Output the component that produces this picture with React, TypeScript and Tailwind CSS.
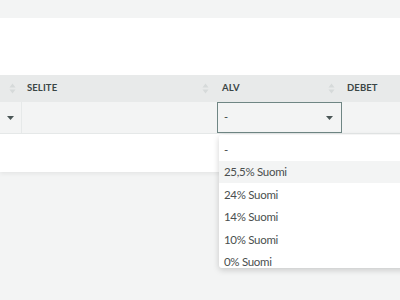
import React from 'react';

const options = ['-', '25,5% Suomi', '24% Suomi', '14% Suomi', '10% Suomi', '0% Suomi'];

function SortIcon() {
  return (
    <svg width="7" height="11" viewBox="0 0 7 11" className="shrink-0">
      <path d="M3.5 0.5 L6.5 4.5 L0.5 4.5 Z" fill="#d6dada" />
      <path d="M3.5 10.5 L6.5 6.5 L0.5 6.5 Z" fill="#d6dada" />
    </svg>
  );
}

function Caret() {
  return (
    <svg width="7" height="4" viewBox="0 0 7 4">
      <path d="M0 0 L7 0 L3.5 4 Z" fill="#4a5656" />
    </svg>
  );
}

export default function App() {
  return (
    <div
      className="relative h-[300px] w-[400px] overflow-hidden bg-[#f3f4f4] text-[#3b4646]"
      style={{ fontFamily: 'Lato, "Open Sans", sans-serif' }}
    >
      <div className="h-[18px]" />
      <div className="h-[57px] bg-white" />

      {/* Table header */}
      <div className="flex h-[27px] items-center bg-[#e8eaea] text-[9.5px] font-bold tracking-[0.1px]">
        <div className="flex w-[22px] justify-end pr-[6px]">
          <SortIcon />
        </div>
        <div className="flex w-[195px] items-center justify-between pl-[5px] pr-[8px]">
          <span>SELITE</span>
          <SortIcon />
        </div>
        <div className="flex w-[125px] items-center justify-between pl-[5px] pr-[7px]">
          <span>ALV</span>
          <SortIcon />
        </div>
        <div className="pl-[5px]">DEBET</div>
      </div>

      {/* Edit row */}
      <div className="flex h-[32px] border-b border-[#e6e9e9] bg-[#f3f4f4]">
        <div className="flex w-[22px] items-center justify-center border-r border-[#e6e9e9]">
          <Caret />
        </div>
        <div className="w-[195px]" />
        <div className="flex h-[31px] w-[125px] items-center justify-between border border-[#6f8684] pl-[6px] pr-[8px] text-[11px]">
          <span>-</span>
          <Caret />
        </div>
      </div>

      <div className="h-[38px] bg-white shadow-[0_2px_4px_rgba(0,0,0,0.06)]" />

      {/* Dropdown */}
      <div className="absolute left-[219px] top-[135px] h-[133px] w-[200px] overflow-hidden rounded-[3px] bg-white pt-[3px] text-[11.5px] tracking-[-0.3px] text-[#4a4f4f] shadow-[0_2px_6px_rgba(0,0,0,0.18)]">
        {options.map((o, i) => (
          <div
            key={o}
            className={`flex h-[22.5px] items-center pl-[5px] ${i === 1 ? 'bg-[#f3f4f4]' : ''}`}
          >
            {o}
          </div>
        ))}
      </div>
    </div>
  );
}
